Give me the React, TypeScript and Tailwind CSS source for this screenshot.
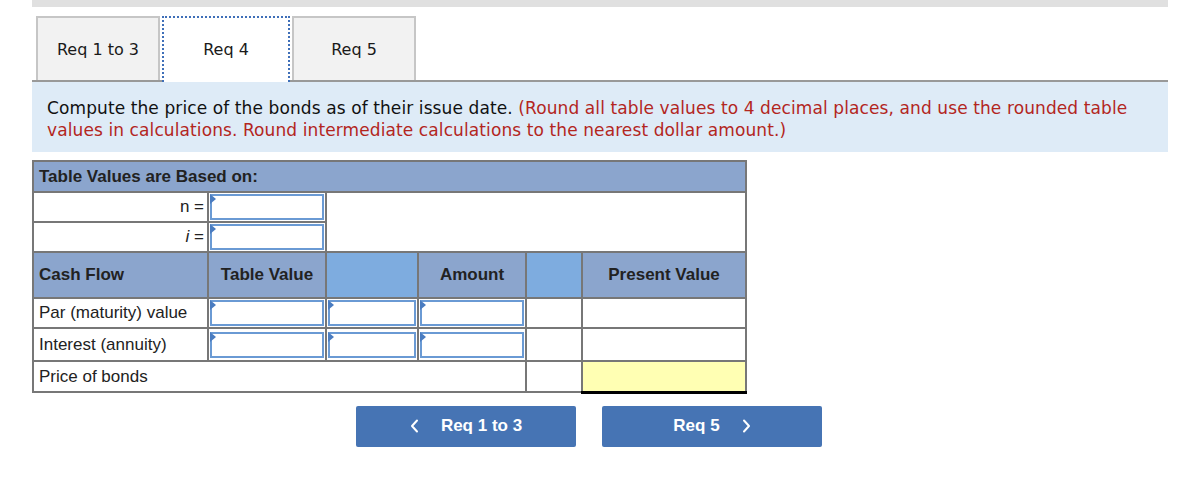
import React from 'react';

const tableFont = { fontFamily: '"Liberation Sans", Arial, sans-serif' };
const tabFont = { fontFamily: '"DejaVu Sans", Verdana, sans-serif' };

function InputCell() {
  return (
    <td className="border-2 border-[#777] p-[1px] bg-white">
      <div className="relative h-[26px] border-2 border-[#6a9ad4] bg-white">
        <div className="absolute -left-[2px] -top-[2px] w-0 h-0 border-t-[5px] border-b-[5px] border-l-[6px] border-t-transparent border-b-transparent border-l-[#4a7cc0]" />
      </div>
    </td>
  );
}

function Chevron({ dir }: { dir: 'left' | 'right' }) {
  return (
    <svg width="9" height="14" viewBox="0 0 9 14" fill="none" stroke="white" strokeWidth="2" strokeLinecap="round" strokeLinejoin="round">
      {dir === 'left' ? <path d="M7 1.5 L2 7 L7 12.5" /> : <path d="M2 1.5 L7 7 L2 12.5" />}
    </svg>
  );
}

export default function App() {
  const tabs = ['Req 1 to 3', 'Req 4', 'Req 5'];

  return (
    <div className="w-[1204px] h-[498px] bg-white">
      <div className="ml-[32px] w-[1136px]">
        <div className="h-[7px] bg-[#e0e0e0]" />

        {/* tabs */}
        <div className="mt-[9px] flex items-end border-b-2 border-[#999] pl-[4px] gap-[2px]" style={tabFont}>
          {tabs.map((t) =>
            t === 'Req 4' ? (
              <div
                key={t}
                className="relative -mb-[2px] h-[66px] w-[128px] bg-white border-2 border-b-0 border-dotted border-[#3f6fb8] flex items-center justify-center text-[16px] text-[#1a1a1a]"
              >
                {t}
              </div>
            ) : (
              <div
                key={t}
                className="h-[64px] w-[124px] bg-[#f2f2f2] border-2 border-b-0 border-[#c6c6c6] flex items-center justify-center text-[16px] text-[#1a1a1a] pt-[2px]"
              >
                {t}
              </div>
            )
          )}
        </div>

        {/* instructions */}
        <div className="bg-[#deebf7] px-[15px] pt-[15px] pb-[11px] text-[17px] leading-[22px] tracking-[0.1px] text-[#111]" style={tabFont}>
          <p>
            Compute the price of the bonds as of their issue date.{' '}
            <span className="text-[#b3261e]">
              (Round all table values to 4 decimal places, and use the rounded table values in calculations. Round intermediate calculations to the nearest dollar amount.)
            </span>
          </p>
        </div>

        {/* table */}
        <table className="mt-[8px] table-fixed border-collapse w-[713px] text-[17px] text-[#222]" style={tableFont}>
          <colgroup>
            <col className="w-[175px]" />
            <col className="w-[118px]" />
            <col className="w-[92px]" />
            <col className="w-[108px]" />
            <col className="w-[56px]" />
            <col className="w-[164px]" />
          </colgroup>
          <tbody>
            <tr className="h-[31px]">
              <td colSpan={6} className="border-2 border-[#777] bg-[#8ba5cd] px-[5px] font-bold">
                Table Values are Based on:
              </td>
            </tr>
            <tr className="h-[30px]">
              <td className="border-2 border-[#777] text-right pr-[3px] bg-white">n =</td>
              <InputCell />
              <td rowSpan={2} colSpan={4} className="border-2 border-[#777] bg-white" />
            </tr>
            <tr className="h-[30px]">
              <td className="border-2 border-[#777] text-right pr-[3px] bg-white">
                <i>i</i> =
              </td>
              <InputCell />
            </tr>
            <tr className="h-[46px] font-bold">
              <td className="border-2 border-[#777] bg-[#8ba5cd] px-[5px]">Cash Flow</td>
              <td className="border-2 border-[#777] bg-[#8ba5cd] text-center">Table Value</td>
              <td className="border-2 border-[#777] bg-[#7eacdf]" />
              <td className="border-2 border-[#777] bg-[#8ba5cd] text-center">Amount</td>
              <td className="border-2 border-[#777] bg-[#7eacdf]" />
              <td className="border-2 border-[#777] bg-[#8ba5cd] text-center">Present Value</td>
            </tr>
            <tr className="h-[30px]">
              <td className="border-2 border-[#777] px-[5px] bg-white">Par (maturity) value</td>
              <InputCell />
              <InputCell />
              <InputCell />
              <td className="border-2 border-[#777] bg-white" />
              <td className="border-2 border-[#777] bg-white" />
            </tr>
            <tr className="h-[33px]">
              <td className="border-2 border-[#777] px-[5px] bg-white">Interest (annuity)</td>
              <InputCell />
              <InputCell />
              <InputCell />
              <td className="border-2 border-[#777] bg-white" />
              <td className="border-2 border-[#777] bg-white" />
            </tr>
            <tr className="h-[31px]">
              <td colSpan={4} className="border-2 border-[#777] px-[5px] bg-white">Price of bonds</td>
              <td className="border-2 border-[#777] bg-white" />
              <td className="border-2 border-[#777] border-b-[3px] border-b-black bg-[#ffffb3]" />
            </tr>
          </tbody>
        </table>

        {/* nav buttons */}
        <div className="mt-[12px] ml-[324px] flex gap-[26px]" style={tableFont}>
          <button className="w-[220px] h-[41px] rounded-[2px] bg-[#4674b4] text-white font-bold text-[17px] flex items-center justify-center gap-[22px]">
            <Chevron dir="left" />
            Req 1 to 3
          </button>
          <button className="w-[220px] h-[41px] rounded-[2px] bg-[#4674b4] text-white font-bold text-[17px] flex items-center justify-center gap-[22px]">
            Req 5
            <Chevron dir="right" />
          </button>
        </div>
      </div>
    </div>
  );
}
